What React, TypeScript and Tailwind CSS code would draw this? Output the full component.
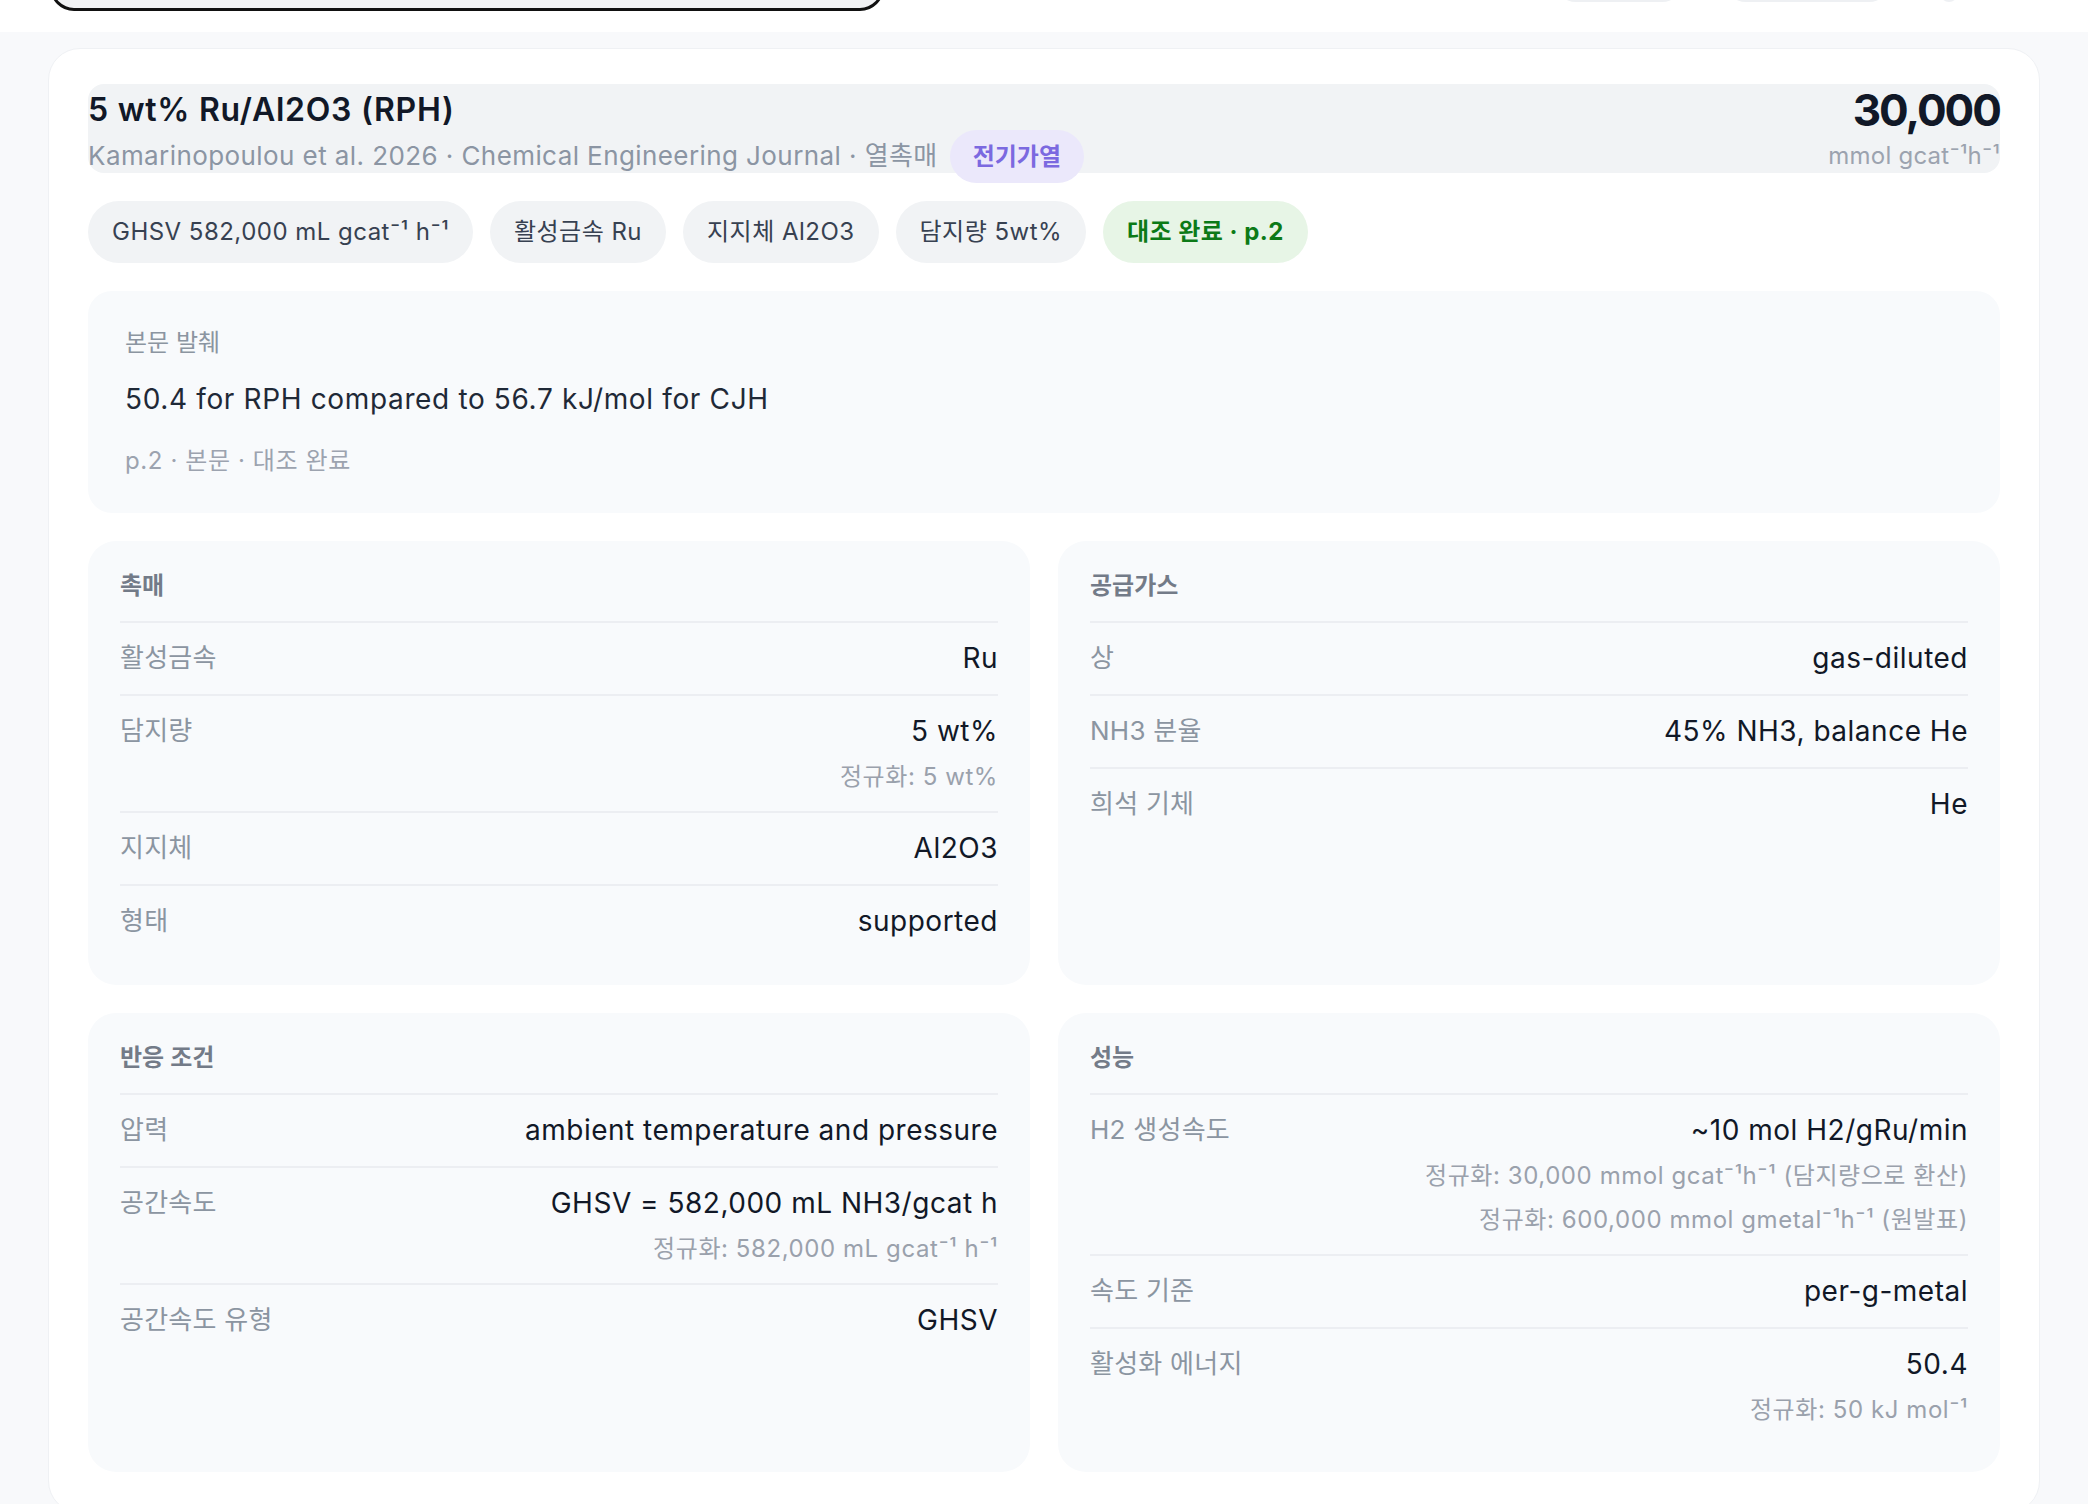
import React from "react";

type RowProps = { label: string; value: string; norms?: string[] };

const Row = ({ label, value, norms }: RowProps) => (
  <div className="flex items-start justify-between gap-6 border-t-2 border-[#eceef2] pb-[16px] pt-[15px]">
    <div className="shrink-0 text-[26px] leading-[40px] tracking-[0.01em] text-[#8b95a1]">{label}</div>
    <div className="flex flex-col items-end text-right">
      <div className="text-[28px] leading-[40px] tracking-[0.018em] text-[#111827]">{value}</div>
      {norms?.map((n) => (
        <div key={n} className="mt-[8px] text-[24px] leading-[36px] tracking-[0.024em] text-[#9aa1ac]">
          {n}
        </div>
      ))}
    </div>
  </div>
);

const Section = ({ title, rows }: { title: string; rows: RowProps[] }) => (
  <div className="rounded-[28px] bg-[#f8fafc] px-[32px] pb-[28px] pt-[28px]">
    <div className="mb-[18px] text-[24px] font-semibold leading-[34px] text-[#737b88]">{title}</div>
    {rows.map((r) => (
      <Row key={r.label} {...r} />
    ))}
  </div>
);

const Chip = ({ children, green }: { children: React.ReactNode; green?: boolean }) => (
  <div
    className={
      green
        ? "flex h-[62px] items-center rounded-full bg-[#e7f5e6] px-[24px] text-[24px] font-bold tracking-[0.02em] text-[#0c7a17]"
        : "flex h-[62px] items-center rounded-full bg-[#f1f3f5] px-[24px] text-[24px] tracking-[0.02em] text-[#374151]"
    }
  >
    {children}
  </div>
);

export default function App() {
  return (
    <div className="min-h-screen bg-[#f8f9fb] font-[family-name:Inter,'Noto_Sans_CJK_KR',sans-serif]">
      <div className="flex h-[32px] items-start overflow-hidden bg-white px-[50px]">
        <div className="-mt-[50px] h-[61px] w-[834px] shrink-0 rounded-[24px] border-[3px] border-[#111] bg-[#f1f2f4]" />
        <div className="ml-auto flex items-start">
          <div className="-mt-[40px] h-[42px] w-[128px] rounded-full bg-[#eef0f3]" />
          <div className="ml-[42px] -mt-[40px] h-[42px] w-[165px] rounded-full bg-[#eef0f3]" />
          <div className="ml-[50px] mr-[80px] -mt-[40px] h-[42px] w-[18px] rounded-full bg-[#eef0f3]" />
        </div>
      </div>
      <div className="px-[48px] pt-[16px]">
        <div className="flex flex-col gap-[28px] rounded-[32px] border border-[#eff1f4] bg-white px-[39px] pb-[40px] pt-[35px]">
          <div className="flex items-start justify-between rounded-[16px] bg-[#f1f3f5]">
            <div>
              <div className="text-[32px] font-semibold leading-[52px] tracking-[0.023em] text-[#111827]">
                5 wt% Ru/Al2O3 (RPH)
              </div>
              <div className="mt-[4px] text-[26px] leading-[32px] tracking-[0.016em] text-[#8b95a3]">
                Kamarinopoulou et al. 2026 · Chemical Engineering Journal · 열촉매
                <span className="ml-[12px] rounded-full bg-[#ebe8fb] px-[23px] py-[12px] text-[24px] font-semibold tracking-normal text-[#7b69e0]">
                  전기가열
                </span>
              </div>
            </div>
            <div className="text-right">
              <div className="text-[44px] font-bold leading-[52px] tracking-[-0.045em] text-[#111827]">30,000</div>
              <div className="mt-[4px] text-[24px] leading-[32px] tracking-[0.01em] text-[#9ca3af]">mmol gcat⁻¹h⁻¹</div>
            </div>
          </div>

          <div className="flex flex-wrap gap-[17px]">
            <Chip>GHSV 582,000 mL gcat⁻¹ h⁻¹</Chip>
            <Chip>활성금속 Ru</Chip>
            <Chip>지지체 Al2O3</Chip>
            <Chip>담지량 5wt%</Chip>
            <Chip green>대조 완료 · p.2</Chip>
          </div>

          <div className="rounded-[24px] bg-[#f8fafc] px-[37px] pb-[34px] pt-[34px]">
            <div className="text-[24px] leading-[36px] text-[#8b95a1]">본문 발췌</div>
            <div className="mt-[17px] text-[28px] leading-[42px] tracking-[0.023em] text-[#1f2937]">
              50.4 for RPH compared to 56.7 kJ/mol for CJH
            </div>
            <div className="mt-[23px] text-[24px] leading-[36px] tracking-[0.025em] text-[#9ca3af]">
              p.2 · 본문 · 대조 완료
            </div>
          </div>

          <div className="grid grid-cols-2 gap-[28px]">
            <Section
              title="촉매"
              rows={[
                { label: "활성금속", value: "Ru" },
                { label: "담지량", value: "5 wt%", norms: ["정규화: 5 wt%"] },
                { label: "지지체", value: "Al2O3" },
                { label: "형태", value: "supported" },
              ]}
            />
            <Section
              title="공급가스"
              rows={[
                { label: "상", value: "gas-diluted" },
                { label: "NH3 분율", value: "45% NH3, balance He" },
                { label: "희석 기체", value: "He" },
              ]}
            />
            <Section
              title="반응 조건"
              rows={[
                { label: "압력", value: "ambient temperature and pressure" },
                {
                  label: "공간속도",
                  value: "GHSV = 582,000 mL NH3/gcat h",
                  norms: ["정규화: 582,000 mL gcat⁻¹ h⁻¹"],
                },
                { label: "공간속도 유형", value: "GHSV" },
              ]}
            />
            <Section
              title="성능"
              rows={[
                {
                  label: "H2 생성속도",
                  value: "~10 mol H2/gRu/min",
                  norms: [
                    "정규화: 30,000 mmol gcat⁻¹h⁻¹ (담지량으로 환산)",
                    "정규화: 600,000 mmol gmetal⁻¹h⁻¹ (원발표)",
                  ],
                },
                { label: "속도 기준", value: "per-g-metal" },
                { label: "활성화 에너지", value: "50.4", norms: ["정규화: 50 kJ mol⁻¹"] },
              ]}
            />
          </div>
        </div>
      </div>
    </div>
  );
}
